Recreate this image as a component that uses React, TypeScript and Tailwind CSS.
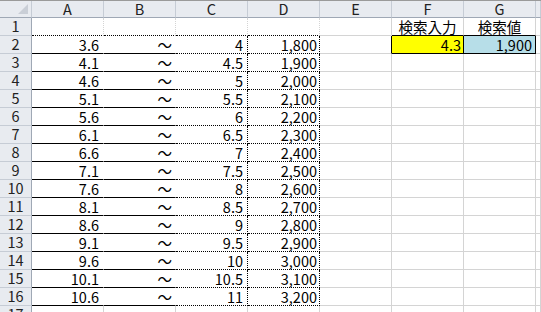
import React from "react";

const cols = ["A", "B", "C", "D", "E", "F", "G", ""];

const rows = Array.from({ length: 15 }, (_, i) => {
  const a = 3.6 + i * 0.5;
  const c = a + 0.4;
  const d = 1800 + i * 100;
  return {
    a: (Math.round(a * 10) / 10).toString(),
    c: (Math.round(c * 10) / 10).toString(),
    d: d.toLocaleString("en-US"),
  };
});

const grid = "border-r border-b border-r-[#d4d4d4] border-b-[#d4d4d4]";

const Cell = ({
  className = "",
  children,
}: {
  className?: string;
  children?: React.ReactNode;
}) => (
  <div className={`h-[18px] flex items-end whitespace-nowrap leading-[16px] ${className}`}>
    {children}
  </div>
);

const RowHead = ({ n }: { n: number | string }) => (
  <Cell className="justify-center pb-[1px] bg-[#e8ebf0] border-r border-b border-r-[#9fa8b5] border-b-[#c6ccd5] text-[#222]">
    {n}
  </Cell>
);

export default function App() {
  return (
    <div
      className="w-[541px] h-[312px] overflow-hidden bg-white border-t border-[#9a9a9a] text-[14.5px] text-black"
      style={{ fontFamily: '"Noto Sans CJK JP", "Noto Sans", sans-serif' }}
    >
      <div className="grid grid-cols-[32px_repeat(7,72px)_1fr]">
        {/* header row */}
        <div className="h-[17px] relative bg-[#e8ebf0] border-r border-b border-r-[#c6ccd5] border-b-[#9fa8b5]">
          <div className="absolute right-[3px] bottom-[3px] w-0 h-0 border-l-[10px] border-l-transparent border-b-[10px] border-b-[#c9ced6]" />
        </div>
        {cols.map((c, i) => (
          <div
            key={i}
            className="h-[17px] flex items-end justify-center leading-[16px] bg-[#e8ebf0] border-r border-b border-r-[#c6ccd5] border-b-[#9fa8b5] text-[#222]"
          >
            {c}
          </div>
        ))}

        {/* row 1 */}
        <RowHead n={1} />
        {["A", "B", "C", "D"].map((k) => (
          <Cell key={k} className={`${grid} border-b-black border-dotted border-r-solid`} />
        ))}
        <Cell className={grid} />
        <Cell className={`${grid} justify-center border-b-black`}>検索入力</Cell>
        <Cell className={`${grid} justify-center border-b-black`}>検索値</Cell>
        <Cell className={grid} />

        {rows.map((r, i) => (
          <React.Fragment key={i}>
            <RowHead n={i + 2} />
            <Cell className="justify-end pr-[4px] border-r border-b border-r-white border-b-black border-b-dotted">
              {r.a}
            </Cell>
            <Cell className="justify-end pr-[3px] border-r border-b border-r-white border-b-black border-b-dotted">
              ～
            </Cell>
            <Cell className="justify-end pr-[4px] border-r border-b border-black border-dotted">
              {r.c}
            </Cell>
            <Cell className="justify-end pr-[2px] border-r border-b border-black border-dotted">
              {r.d}
            </Cell>
            {i === 0 ? (
              <>
                <Cell className={`${grid} border-r-black`} />
                <Cell className="justify-end pr-[2px] bg-[#ffff00] border-r border-b border-black">4.3</Cell>
                <Cell className="justify-end pr-[3px] bg-[#b7dee8] border-r border-b border-black">1,900</Cell>
                <Cell className={grid} />
              </>
            ) : (
              <>
                <Cell className={grid} />
                <Cell className={grid} />
                <Cell className={grid} />
                <Cell className={grid} />
              </>
            )}
          </React.Fragment>
        ))}

        {/* row 17 partial */}
        <RowHead n={17} />
        {Array.from({ length: 8 }, (_, i) => (
          <Cell key={i} className={grid} />
        ))}
      </div>
    </div>
  );
}
